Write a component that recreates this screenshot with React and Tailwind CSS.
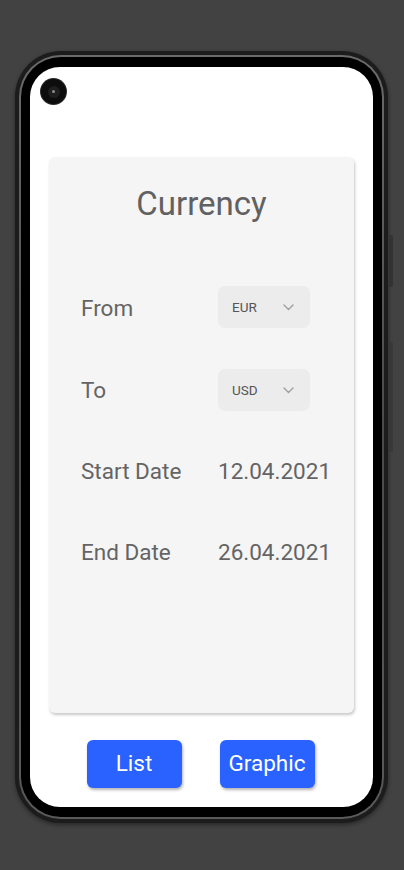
import React from "react";

const Chevron = () => (
  <svg width="11" height="7" viewBox="0 0 11 7" fill="none">
    <path d="M1 1l4.5 4.5L10 1" stroke="#9e9e9e" strokeWidth="1.4" strokeLinecap="round" strokeLinejoin="round" />
  </svg>
);

const Select = ({ value }) => (
  <div className="flex h-[42px] w-[92px] items-center justify-between rounded-[7px] bg-[#ececec] pl-[14px] pr-[16px]">
    <span className="pt-[1px] text-[13.5px] text-[#555555]">{value}</span>
    <Chevron />
  </div>
);

const Row = ({ label, children, className = "", labelPad = "" }) => (
  <div className={`flex h-[42px] items-center ${className}`}>
    <div className={`w-[137px] text-[22.5px] text-[#646464] ${labelPad}`}>{label}</div>
    <div className="text-[22.5px] text-[#646464]">{children}</div>
  </div>
);

export default function App() {
  return (
    <div
      className="relative h-[870px] w-[404px] overflow-hidden bg-[#424242]"
      style={{ fontFamily: "Roboto, 'Noto Sans', sans-serif" }}
    >
      <div className="relative ml-[15px] mt-[51px] w-[373px]">
        {/* side buttons */}
        <div className="absolute right-[-5px] top-[184px] h-[52px] w-[4px] rounded-r-[2px] bg-[#333333]" />
        <div className="absolute right-[-5px] top-[291px] h-[110px] w-[4px] rounded-r-[2px] bg-[#383838]" />
        <div className="rounded-[46px] bg-[#1c1c1c] p-[4px] shadow-[0_2px_4px_rgba(0,0,0,0.4)]">
          <div className="rounded-[42px] bg-gradient-to-b from-[#6a6a6a] via-[#4a4a4a] to-[#5a5a5a] p-[2px]">
            <div className="rounded-[40px] bg-black px-[9px] pb-[10px] pt-[10px]">
              <div className="relative flex h-[740px] flex-col overflow-hidden rounded-[30px] bg-white">
                {/* camera */}
                <div className="absolute left-[11px] top-[12px] flex h-[25px] w-[25px] items-center justify-center rounded-full bg-[#0d0d0d] ring-1 ring-[#2a2a2a]">
                  <div className="flex h-[12px] w-[12px] items-center justify-center rounded-full bg-[#1e1e1e]">
                    <div className="h-[3px] w-[3px] rounded-full bg-[#8a8a8a]" />
                  </div>
                </div>

                <div className="mx-[19px] mt-[90px] flex h-[556px] flex-col rounded-[6px] bg-[#f5f5f5] shadow-[1px_2px_3px_rgba(0,0,0,0.22)]">
                  <div className="pt-[27px] text-center text-[33px] leading-[40px] text-[#616161]">
                    Currency
                  </div>
                  <div className="mt-[62px] flex flex-col pl-[32px]">
                    <Row label="From" labelPad="pt-[4px]">
                      <Select value="EUR" />
                    </Row>
                    <Row label="To" labelPad="pt-[2px]" className="mt-[41px]">
                      <Select value="USD" />
                    </Row>
                    <Row label="Start Date" className="mt-[40px]">
                      12.04.2021
                    </Row>
                    <Row label="End Date" className="mt-[39px]">
                      26.04.2021
                    </Row>
                  </div>
                </div>

                <div className="mt-[27px] flex justify-center gap-[38px] pr-[2px]">
                  <button className="flex h-[48px] w-[95px] items-center justify-center rounded-[6px] bg-[#2962ff] text-[22.5px] text-white shadow-[1px_2px_3px_rgba(0,0,0,0.3)]">
                    List
                  </button>
                  <button className="flex h-[48px] w-[95px] items-center justify-center rounded-[6px] bg-[#2962ff] text-[22.5px] text-white shadow-[1px_2px_3px_rgba(0,0,0,0.3)]">
                    Graphic
                  </button>
                </div>
              </div>
            </div>
          </div>
        </div>
      </div>
    </div>
  );
}
